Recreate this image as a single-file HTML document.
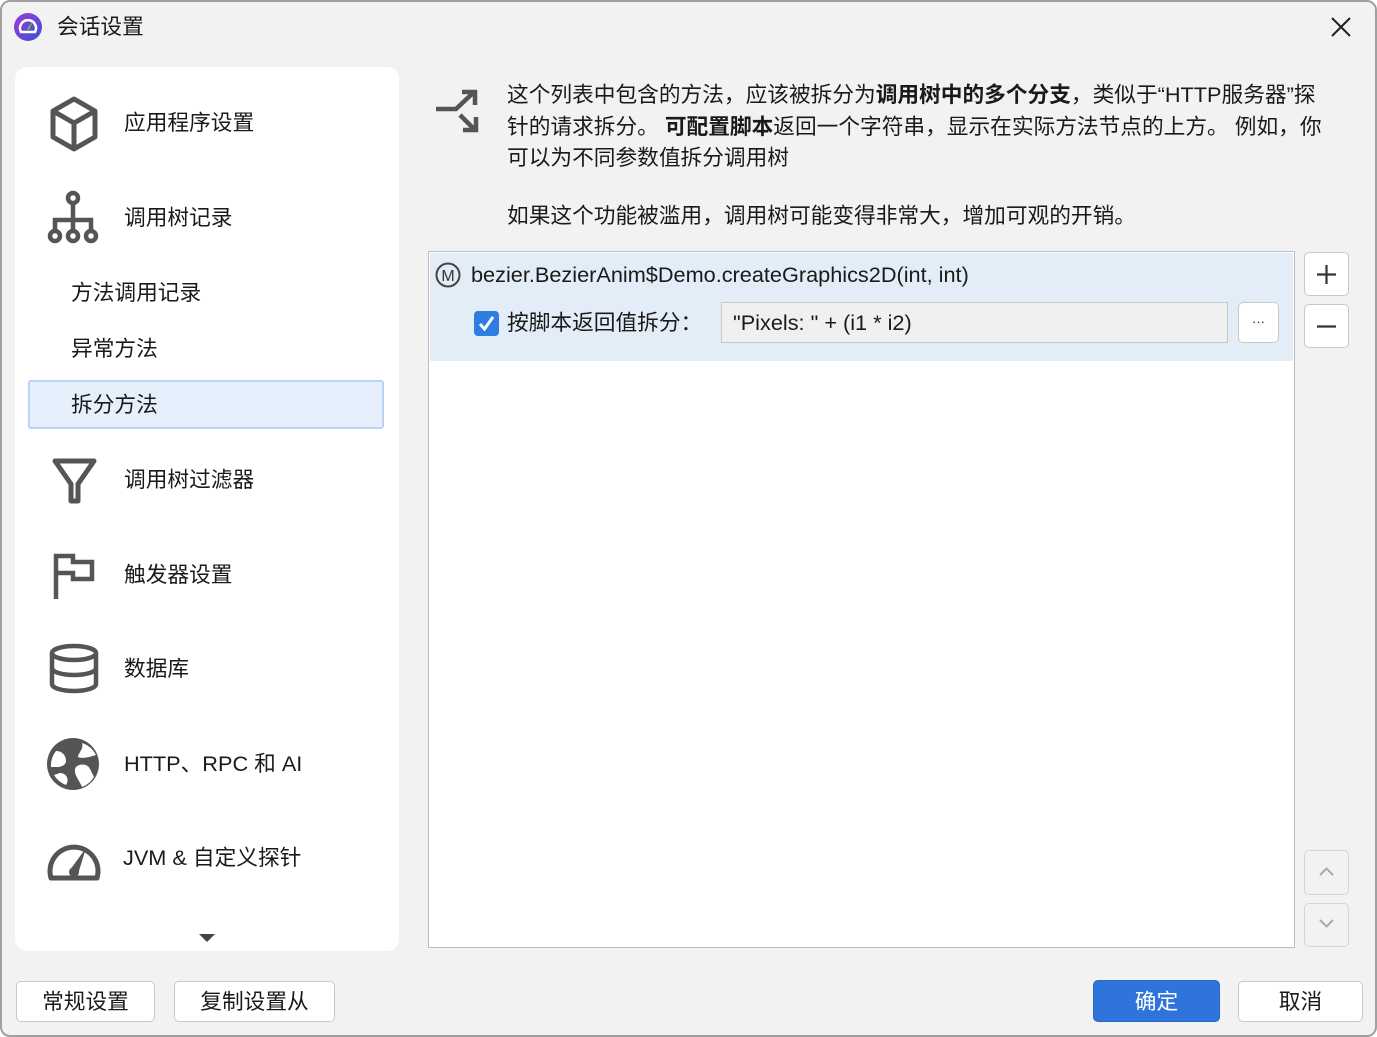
<!DOCTYPE html>
<html><head><meta charset="utf-8"><style>
*{margin:0;padding:0;box-sizing:border-box}
body{width:1377px;height:1037px;background:#fff;font-family:"Liberation Sans","Noto Sans CJK SC",sans-serif;color:#1a1a1a;overflow:hidden;position:relative}
#win{position:absolute;left:0;top:0;width:1377px;height:1037px;background:#f2f2f2;border:2px solid #a0a0a0;border-radius:10px}
.abs{position:absolute}
.t{position:absolute;white-space:nowrap;font-size:21.7px;line-height:24px}
.side{position:absolute;left:15px;top:67px;width:384px;height:884px;background:#fff;border-radius:12px}
.btn{position:absolute;background:#fff;border:1.5px solid #c8c8c8;border-radius:5px;font-size:21.7px;text-align:center}
svg{position:absolute}
</style></head><body>
<div id="win"></div>
<svg style="left:14px;top:13px" width="28" height="28" viewBox="0 0 28 28"><defs><linearGradient id="g" x1="0" y1="0" x2="1" y2="1"><stop offset="0" stop-color="#9b3fcf"/><stop offset="1" stop-color="#3b4fd8"/></linearGradient></defs><circle cx="14" cy="14" r="14" fill="url(#g)"/><path d="M7 19 A8 8 0 1 1 21 19 Z" fill="none" stroke="#fff" stroke-width="2.5"/><path d="M13 16 L19 8 L15 17 Z" fill="#5bd041"/></svg>
<div class="t" style="left:57px;top:15px">会话设置</div>
<svg style="left:1330px;top:16px" width="22" height="22" viewBox="0 0 22 22"><path d="M2 2L20 20M20 2L2 20" stroke="#222" stroke-width="2"/></svg>

<div class="side"></div>
<svg style="left:48px;top:96px" width="52" height="56" viewBox="0 0 52 56"><path d="M26 3 L47 15 L47 41 L26 53 L5 41 L5 15 Z M5 15 L26 27 L47 15 M26 27 L26 53" fill="none" stroke="#555" stroke-width="5" stroke-linejoin="round"/></svg>
<div class="t" style="left:124px;top:111px">应用程序设置</div>
<svg style="left:46px;top:190px" width="56" height="56" viewBox="0 0 56 56"><g fill="none" stroke="#555" stroke-width="4.5"><circle cx="27" cy="8" r="5"/><path d="M27 13V26M9 41V30H45V41M27 26V41"/><circle cx="9" cy="46" r="5"/><circle cx="27" cy="46" r="5"/><circle cx="45" cy="46" r="5"/></g></svg>
<div class="t" style="left:124px;top:206px">调用树记录</div>
<div class="t" style="left:71px;top:281px">方法调用记录</div>
<div class="t" style="left:71px;top:337px">异常方法</div>
<div class="abs" style="left:28px;top:380px;width:356px;height:49px;background:#e6f0fd;border:2px solid #b9d4f8;border-radius:3px"></div>
<div class="t" style="left:71px;top:393px">拆分方法</div>
<svg style="left:50px;top:458px" width="48" height="46" viewBox="0 0 48 46"><path d="M5 3H44L28 26V43H21V26Z" fill="none" stroke="#555" stroke-width="5" stroke-linejoin="round"/></svg>
<div class="t" style="left:124px;top:468px">调用树过滤器</div>
<svg style="left:53px;top:553px" width="44" height="48" viewBox="0 0 44 48"><path d="M3 46V3H20V9H39V26H20V20H3" fill="none" stroke="#555" stroke-width="4.5"/></svg>
<div class="t" style="left:124px;top:563px">触发器设置</div>
<svg style="left:48px;top:643px" width="52" height="52" viewBox="0 0 52 52"><g fill="none" stroke="#555" stroke-width="4.5"><ellipse cx="26" cy="10" rx="22" ry="7"/><path d="M4 10V41C4 45 14 48 26 48S48 45 48 41V10M4 25C4 29 14 32 26 32S48 29 48 25"/></g></svg>
<div class="t" style="left:124px;top:657px">数据库</div>
<svg style="left:46px;top:737px" width="56" height="56" viewBox="0 0 56 56"><circle cx="27" cy="27" r="26" fill="#555"/><path d="M10 14C16 14 20 18 20 24C20 28 15 30 12 30L5 30A24 24 0 0 1 10 14Z M30 30C34 26 42 27 44 32L48 40A24 24 0 0 1 36 50C34 44 26 36 30 30Z M36 6C38 12 32 16 32 20C36 22 44 20 50 18A24 24 0 0 0 36 6Z M14 36C20 36 24 42 20 48A24 24 0 0 1 8 38Z" fill="#fff"/></svg>
<div class="t" style="left:124px;top:752px">HTTP、RPC 和 AI</div>
<svg style="left:46px;top:834px" width="56" height="48" viewBox="0 0 56 48"><path d="M5 44A24 24 0 1 1 51 44Z" fill="none" stroke="#555" stroke-width="5" stroke-linejoin="round"/><path d="M24 36L40 14L32 40Z" fill="#555"/><circle cx="28" cy="38" r="5" fill="#555"/></svg>
<div class="t" style="left:123px;top:846px">JVM &amp; 自定义探针</div>
<svg style="left:198px;top:933px" width="18" height="10" viewBox="0 0 18 10"><path d="M1 1H17L9 9Z" fill="#444"/></svg>

<svg style="left:434px;top:88px" width="46" height="46" viewBox="0 0 46 46"><g fill="none" stroke="#555" stroke-width="4.5"><path d="M2 21H22L40 4M28 4H41V17M26 27L40 41M42 29V42H29"/></g></svg>
<div class="t" style="left:507px;top:83px">这个列表中包含的方法，应该被拆分为<b>调用树中的多个分支</b>，类似于“HTTP服务器”探</div>
<div class="t" style="left:507px;top:115px">针的请求拆分。 <b>可配置脚本</b>返回一个字符串，显示在实际方法节点的上方。 例如，你</div>
<div class="t" style="left:507px;top:146px">可以为不同参数值拆分调用树</div>
<div class="t" style="left:507px;top:204px">如果这个功能被滥用，调用树可能变得非常大，增加可观的开销。</div>

<div class="abs" style="left:428px;top:251px;width:867px;height:697px;background:#fff;border:1.5px solid #bdbdbd"></div>
<div class="abs" style="left:430px;top:253px;width:863px;height:108px;background:#e3edf7"></div>
<svg style="left:435px;top:262px" width="26" height="26" viewBox="0 0 26 26"><circle cx="13" cy="13" r="11.5" fill="none" stroke="#444" stroke-width="2"/><text x="13" y="19" text-anchor="middle" font-family="Liberation Sans" font-size="16" fill="#333">M</text></svg>
<div class="t" style="left:471px;top:263px">bezier.BezierAnim$Demo.createGraphics2D(int, int)</div>
<svg style="left:474px;top:311px" width="25" height="25" viewBox="0 0 25 25"><rect width="25" height="25" rx="4" fill="#2f7de0"/><path d="M6 13L10.5 18L19 6" fill="none" stroke="#fff" stroke-width="3"/></svg>
<div class="t" style="left:507px;top:311px">按脚本返回值拆分：</div>
<div class="abs" style="left:721px;top:302px;width:507px;height:41px;background:#f0f0f0;border:1.5px solid #c8c8c8"></div>
<div class="t" style="left:733px;top:311px">"Pixels: " + (i1 * i2)</div>
<div class="btn" style="left:1238px;top:302px;width:41px;height:41px;font-size:13px;line-height:38px">···</div>
<div class="btn" style="left:1304px;top:252px;width:45px;height:44px"></div>
<svg style="left:1316px;top:264px" width="21" height="21"><path d="M10.5 1V20M1 10.5H20" stroke="#333" stroke-width="2.2"/></svg>
<div class="btn" style="left:1304px;top:304px;width:45px;height:44px"></div>
<svg style="left:1316px;top:316px" width="21" height="21"><path d="M1 10.5H20" stroke="#333" stroke-width="2.2"/></svg>
<div class="btn" style="left:1304px;top:850px;width:45px;height:45px;background:#f2f2f2;border-color:#d6d6d6"></div>
<svg style="left:1318px;top:866px" width="17" height="11"><path d="M2 9L8.5 2.5L15 9" fill="none" stroke="#aaa" stroke-width="2"/></svg>
<div class="btn" style="left:1304px;top:903px;width:45px;height:44px;background:#f2f2f2;border-color:#d6d6d6"></div>
<svg style="left:1318px;top:918px" width="17" height="11"><path d="M2 2L8.5 8.5L15 2" fill="none" stroke="#aaa" stroke-width="2"/></svg>

<div class="btn" style="left:16px;top:981px;width:139px;height:41px;line-height:40px">常规设置</div>
<div class="btn" style="left:174px;top:981px;width:161px;height:41px;line-height:40px">复制设置从</div>
<div class="btn" style="left:1093px;top:980px;width:127px;height:42px;line-height:41px;background:#2f74db;border-color:#2a66c4;color:#fff">确定</div>
<div class="btn" style="left:1238px;top:981px;width:125px;height:41px;line-height:40px">取消</div>
</body></html>
